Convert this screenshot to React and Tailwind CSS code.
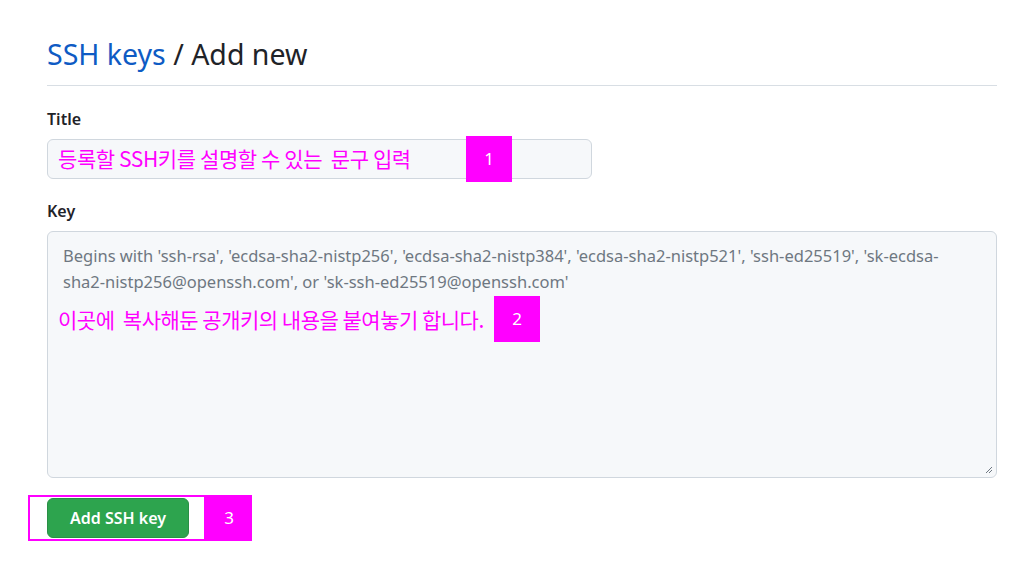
import React from 'react'

const font = { fontFamily: '"Noto Sans", "Noto Sans CJK KR", sans-serif' }
const kr = { fontFamily: '"Noto Sans CJK KR", sans-serif' }

const Badge = ({ n, className }) => (
  <div className={`absolute w-[46px] h-[46px] bg-[#ff00ff] text-white flex items-center justify-center text-[17px] ${className}`}>
    {n}
  </div>
)

export default function App() {
  return (
    <div className="w-[1024px] h-[564px] bg-white pl-[47px] pt-[34px]" style={font}>
      <div className="w-[950px]">
        {/* Header */}
        <div className="border-b border-[#d8dee4] pb-[11px]">
          <h1 className="text-[28.5px] leading-[40px] font-normal text-[#1f2328]">
            <a href="#" className="text-[#0e5bc4]">SSH keys</a> / Add new
          </h1>
        </div>

        {/* Title */}
        <div className="mt-[21px]">
          <label className="block text-[16px] font-semibold text-[#1f2328] leading-[24px]">Title</label>
          <div className="relative mt-[8px] w-[545px] h-[40px] rounded-[6px] border border-[#d0d7de] bg-[#f6f8fa] flex items-center pl-[10px]">
            <span className="text-[21px] text-[#ff00ff] tracking-[-0.4px]" style={kr}>
              등록할 SSH키를 설명할 수 있는&nbsp; 문구 입력
            </span>
            <Badge n="1" className="left-[418px] top-[-4px]" />
          </div>
        </div>

        {/* Key */}
        <div className="mt-[20px]">
          <label className="block text-[16px] font-semibold text-[#1f2328] leading-[24px]">Key</label>
          <div className="relative mt-[8px] h-[247px] rounded-[6px] border border-[#d0d7de] bg-[#f6f8fa] px-[15px] pt-[11px]">
            <p className="text-[16.5px] leading-[26px] text-[#6e7781] pr-[40px]">
              Begins with 'ssh-rsa', 'ecdsa-sha2-nistp256', 'ecdsa-sha2-nistp384', 'ecdsa-sha2-nistp521', 'ssh-ed25519', 'sk-ecdsa-sha2-nistp256@openssh.com', or 'sk-ssh-ed25519@openssh.com'
            </p>
            <div className="relative mt-[10px] -ml-[5px] h-[30px] flex items-center">
              <span className="text-[21px] text-[#ff00ff] tracking-[-0.5px]" style={kr}>
                이곳에&nbsp; 복사해둔 공개키의 내용을 붙여놓기 합니다.
              </span>
              <Badge n="2" className="left-[436px] top-[-9px]" />
            </div>
            <svg className="absolute right-[3px] bottom-[3px]" width="10" height="10" viewBox="0 0 10 10">
              <path d="M9 3L3 9M9 6L6 9" stroke="#6e7781" strokeWidth="1" />
            </svg>
          </div>
        </div>

        {/* Button */}
        <div className="relative mt-[17px] -ml-[19px] flex items-stretch">
          <div className="border-2 border-[#ff00ff] w-[178px] h-[46px] flex items-center pl-[17px]">
            <button className="h-[40px] w-[142px] rounded-[6px] bg-[#2da44e] border border-[#2a8f46] text-white font-semibold text-[16px]">
              Add SSH key
            </button>
          </div>
          <div className="w-[46px] h-[46px] bg-[#ff00ff] text-white flex items-center justify-center text-[17px]">3</div>
        </div>
      </div>
    </div>
  )
}
